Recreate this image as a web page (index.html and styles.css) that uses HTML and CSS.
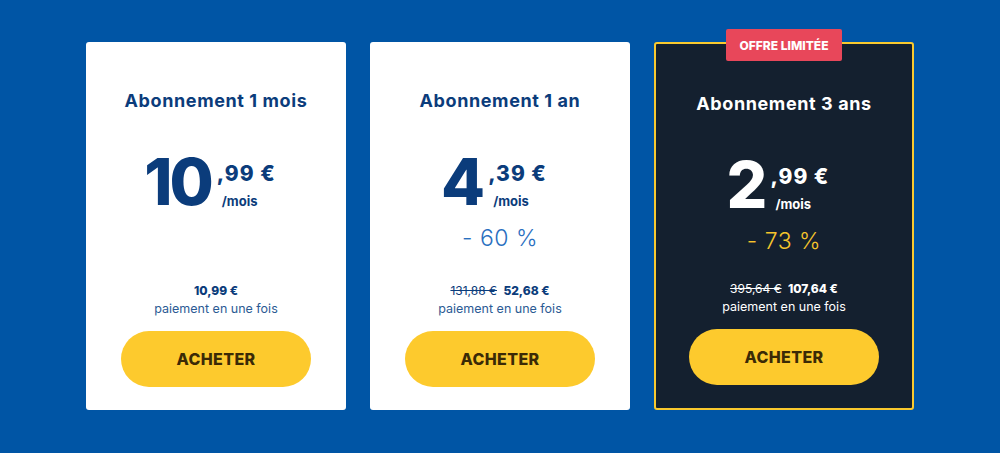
FILE: index.html
```html
<!DOCTYPE html>
<html lang="fr">
<head>
<meta charset="utf-8">
<title>Abonnements</title>
<link rel="stylesheet" href="styles.css">
</head>
<body>
<main class="plans">
  <section class="card">
    <h2 class="title">Abonnement 1 mois</h2>
    <div class="price">
      <span class="int">10</span>
      <span class="side"><span class="dec">,99 €</span><span class="per">/mois</span></span>
    </div>
    <div class="bottom">
      <p class="total"><strong>10,99 €</strong></p>
      <p class="once">paiement en une fois</p>
      <a class="buy" href="#">ACHETER</a>
    </div>
  </section>
  <section class="card">
    <h2 class="title">Abonnement 1 an</h2>
    <div class="price">
      <span class="int">4</span>
      <span class="side"><span class="dec">,39 €</span><span class="per">/mois</span></span>
    </div>
    <p class="discount">- 60 %</p>
    <div class="bottom">
      <p class="total"><s>131,88 €</s> <strong>52,68 €</strong></p>
      <p class="once">paiement en une fois</p>
      <a class="buy" href="#">ACHETER</a>
    </div>
  </section>
  <section class="card card-dark">
    <span class="badge">OFFRE LIMITÉE</span>
    <h2 class="title">Abonnement 3 ans</h2>
    <div class="price">
      <span class="int">2</span>
      <span class="side"><span class="dec">,99 €</span><span class="per">/mois</span></span>
    </div>
    <p class="discount">- 73 %</p>
    <div class="bottom">
      <p class="total"><s>395,64 €</s> <strong>107,64 €</strong></p>
      <p class="once">paiement en une fois</p>
      <a class="buy" href="#">ACHETER</a>
    </div>
  </section>
</main>
</body>
</html>
```
FILE: styles.css
```css
* { box-sizing: border-box; }
html, body { margin: 0; padding: 0; }
body {
  background: #0055a5;
  font-family: Inter, "DejaVu Sans", sans-serif;
  width: 1000px;
  height: 453px;
  overflow: hidden;
}
.plans {
  display: flex;
  justify-content: center;
  gap: 24px;
  padding-top: 42px;
}
.card {
  position: relative;
  width: 260px;
  height: 368px;
  background: #fff;
  border-radius: 3px;
  display: flex;
  flex-direction: column;
  align-items: center;
  padding: 48px 0 23px;
  color: #0b3c7b;
}
.card-dark {
  background: #14202f;
  border: 2px solid #f9c92e;
  color: #fff;
  padding: 49px 0 23px;
}
.badge {
  position: absolute;
  top: -15px;
  left: 70px;
  width: 116px;
  height: 32px;
  background: #e8475a;
  color: #fff;
  font-size: 12px;
  font-weight: 800;
  display: flex;
  align-items: center;
  justify-content: center;
  border-radius: 2px;
}
.title {
  margin: 0;
  font-size: 18px;
  font-weight: 700;
  line-height: 22px;
  letter-spacing: 0.6px;
}
.price {
  display: flex;
  align-items: flex-start;
  margin-top: 40px;
  height: 60px;
  padding-right: 12px;
}
.int {
  font-size: 64px;
  font-weight: 800;
  line-height: 60px;
  letter-spacing: -3px;
}
.side {
  display: flex;
  flex-direction: column;
  margin-left: 6px;
  padding-top: 10px;
}
.dec {
  font-size: 21px;
  font-weight: 800;
  line-height: 24px;
  letter-spacing: 1px;
}
.per {
  font-size: 13px;
  font-weight: 700;
  line-height: 18px;
  margin-top: 6px;
  padding-left: 5px;
}
.discount {
  margin: 12px 0 0;
  font-size: 23px;
  font-weight: 300;
  line-height: 28px;
  letter-spacing: 0.5px;
  color: #2a6fbf;
}
.card-dark .discount { color: #f6c52c; }
.bottom {
  margin-top: auto;
  display: flex;
  flex-direction: column;
  align-items: center;
}
.total {
  margin: 0;
  font-size: 12px;
  line-height: 16px;
}
.total strong { font-weight: 800; }
.total s { font-weight: 400; margin-right: 3px; }
.once {
  margin: 1px 0 0;
  font-size: 12.5px;
  line-height: 17px;
}
.card:not(.card-dark) .once { color: #2b5b94; }
.buy {
  margin-top: 14px;
  width: 190px;
  height: 56px;
  border-radius: 28px;
  background: #fdca2d;
  color: #3b2a06;
  font-size: 16px;
  font-weight: 800;
  letter-spacing: 0.4px;
  text-decoration: none;
  display: flex;
  align-items: center;
  justify-content: center;
}
```
